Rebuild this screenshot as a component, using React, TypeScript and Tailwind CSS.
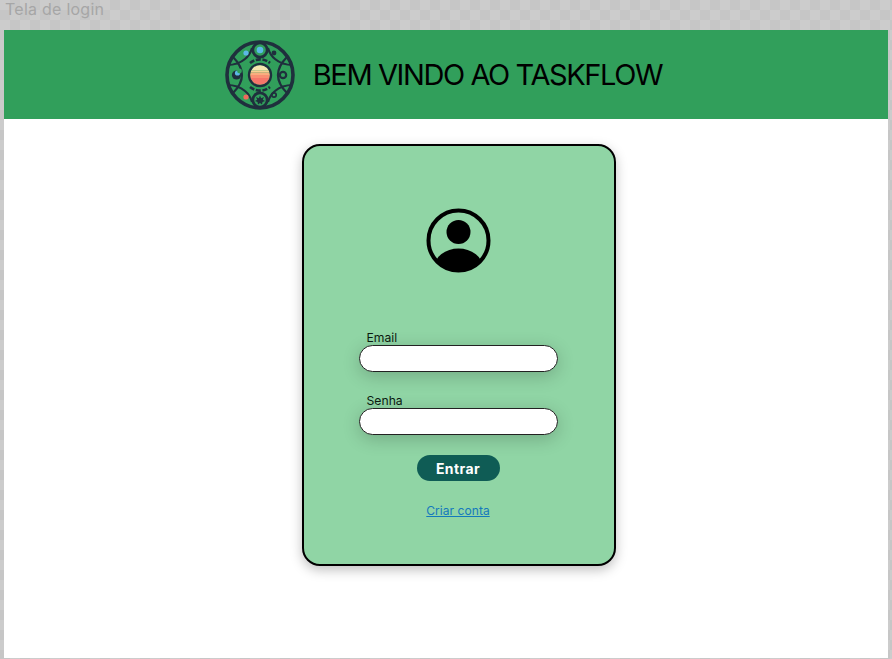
export default function App() {
  return (
    <div className="w-[892px] h-[659px] overflow-hidden flex flex-col bg-[#c9c9c9] bg-[conic-gradient(#c6c6c6_25%,#cccccc_0_50%,#c6c6c6_0_75%,#cccccc_0)] bg-[length:20px_20px] font-['Inter',sans-serif]">
      <div className="h-[30px] shrink-0 pl-[5px] text-[16px] leading-[19px] text-[#a6a6a6] tracking-[0.25px]">Tela de login</div>
      <div className="ml-[4px] w-[884px] h-[628px] bg-white flex flex-col items-center">
        <header className="w-full h-[89px] shrink-0 bg-[#319f5b] flex items-center justify-center gap-[18px] pr-[5px]">
          <Logo />
          <h1 className="text-[29px] leading-[36px] text-black font-normal tracking-[-1.4px] mt-[1px]">BEM VINDO AO TASKFLOW</h1>
        </header>
        <main className="mt-[25px] ml-[26px] w-[314px] h-[422px] rounded-[18px] border-2 border-black bg-[#90d5a5] shadow-[0_4px_12px_rgba(0,0,0,0.25)] flex flex-col items-center pt-[62px] pr-[2px]">
          <svg width="65" height="65" viewBox="0 0 65 65" className="shrink-0">
            <defs>
              <clipPath id="c"><circle cx="32.5" cy="32.5" r="30" /></clipPath>
            </defs>
            <circle cx="32.5" cy="32.5" r="30" fill="none" stroke="#000" strokeWidth="4" />
            <circle cx="32.5" cy="24" r="12" fill="#000" />
            <ellipse cx="32.5" cy="59" rx="24" ry="18.5" fill="#000" clipPath="url(#c)" />
          </svg>
          <div className="mt-[58px] w-[199px] flex flex-col">
            <Field label="Email" />
            <div className="h-[22px]" />
            <Field label="Senha" />
          </div>
          <button className="mt-[20px] w-[83px] h-[26px] pt-[2px] rounded-full bg-[#0f5c55] text-white text-[14px] font-bold tracking-[0.4px] leading-[24px]">Entrar</button>
          <a href="#" className="mt-[21px] text-[12px] leading-[18px] tracking-[0.05px] text-[#1479bd] underline">Criar conta</a>
        </main>
      </div>
    </div>
  );
}

function Field({ label }: { label: string }) {
  return (
    <div className="flex flex-col">
      <label className="h-[14px] pl-[8px] text-[12.2px] leading-[14px] text-[#0c1a10]">{label}</label>
      <div className="h-[27px] rounded-full border border-[#222] bg-white shadow-[0_4px_18px_rgba(0,0,0,0.2)]" />
    </div>
  );
}

function Logo() {
  const d = "#1f2f3d";
  return (
    <svg width="70" height="70" viewBox="0 0 70 70" className="shrink-0">
      <defs>
        <clipPath id="sun"><circle cx="35" cy="35" r="9.8" /></clipPath>
        <clipPath id="outer"><circle cx="35" cy="35" r="33" /></clipPath>
      </defs>
      <g fill="none" stroke={d} strokeWidth="2.2" clipPath="url(#outer)">
        <path d="M8 17 Q26 35 8 53" />
        <path d="M62 17 Q44 35 62 53" />
        <path d="M2 25 Q13 25 20 19 Q25 15 27 8" />
        <path d="M68 25 Q57 25 50 19 Q45 15 43 8" />
        <path d="M2 45 Q13 45 20 51 Q25 55 27 62" />
        <path d="M68 45 Q57 45 50 51 Q45 55 43 62" />
        <circle cx="35" cy="10" r="7.2" strokeWidth="2.8" />
        <circle cx="35" cy="60" r="7.2" strokeWidth="2.8" />
        <path d="M25 23 A15.5 15.5 0 0 1 45 23" strokeWidth="2.6" strokeDasharray="5 1.6" />
        <path d="M25 47 A15.5 15.5 0 0 0 45 47" strokeWidth="2.6" strokeDasharray="5 1.6" />
        <circle cx="58" cy="35" r="3.2" strokeWidth="2.2" />
        <circle cx="49" cy="55" r="2.2" strokeWidth="1.7" />
      </g>
      <circle cx="35" cy="35" r="33" fill="none" stroke={d} strokeWidth="3.6" />
      <circle cx="35" cy="35" r="11" fill="none" stroke={d} strokeWidth="2.4" />
      <circle cx="35" cy="10" r="3.3" fill="#5cb8e6" />
      <circle cx="21" cy="13" r="2.6" fill="#5cb8e6" />
      <circle cx="49" cy="13" r="2.4" fill={d} />
      <circle cx="21" cy="57" r="2.6" fill="#f06a5c" />
      <path d="M35 55.5 L36.2 58.2 L39 57 L37.8 59.8 L40 61 L37.5 62 L37 64.5 L35 63 L33 64.5 L32.5 62 L30 61 L32.2 59.8 L31 57 L33.8 58.2 Z" fill={d} />
      <circle cx="11.5" cy="35" r="4.6" fill={d} />
      <circle cx="12.5" cy="33" r="2.6" fill="#5cb8e6" />
      <circle cx="14.5" cy="31" r="2.4" fill="#319f5b" />
      <g clipPath="url(#sun)">
        <rect x="24" y="24" width="22" height="6.5" fill="#f8e6b0" />
        <rect x="24" y="30.5" width="22" height="2" fill="#f9cf93" />
        <rect x="24" y="32.5" width="22" height="2.5" fill="#f9ae7f" />
        <rect x="24" y="35" width="22" height="3" fill="#f98f72" />
        <rect x="24" y="38" width="22" height="8" fill="#f6766a" />
      </g>
    </svg>
  );
}
